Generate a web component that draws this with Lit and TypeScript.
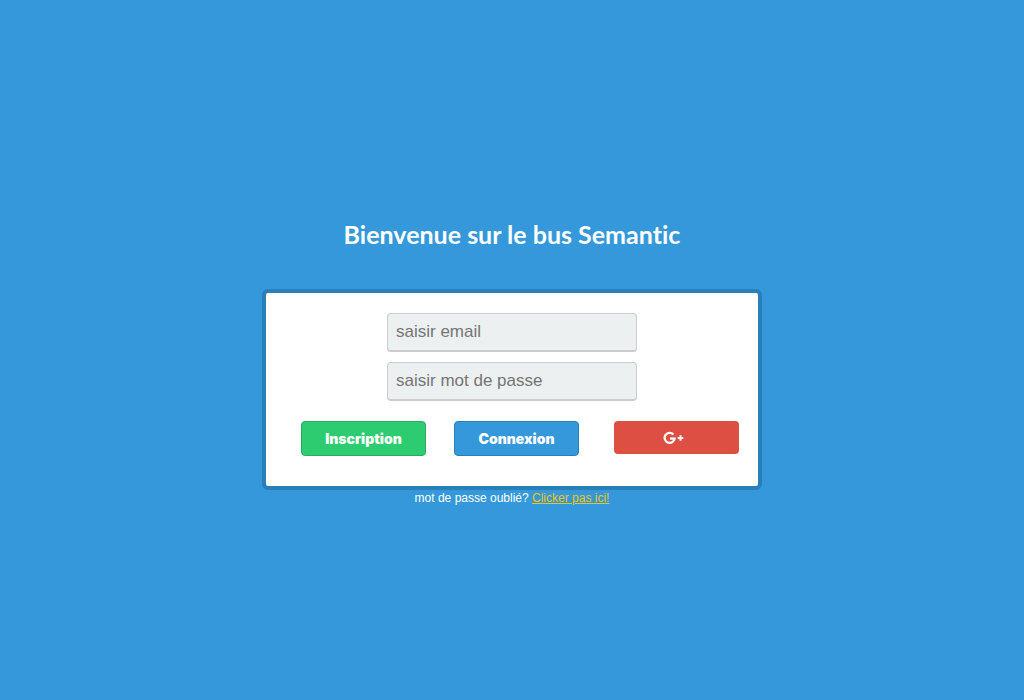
import { LitElement, html, css } from "lit";
import { customElement } from "lit/decorators.js";

@customElement("app-root")
export class AppRoot extends LitElement {
  static styles = css`
    :host {
      display: flex;
      flex-direction: column;
      align-items: center;
      justify-content: center;
      min-height: 100vh;
      box-sizing: border-box;
      background: #3498db;
      color: #fff;
      font-family: "Liberation Sans", Arial, sans-serif;
      font-size: 12px;
    }
    .title {
      margin: 25px 0 39px;
      font: 700 25px/32px Lato, sans-serif;
      font-variant-ligatures: none;
      text-align: center;
    }
    .card {
      box-sizing: border-box;
      width: 500px;
      max-width: 100%;
      padding: 20px 0 30px;
      border: 4px solid #2980b9;
      border-radius: 6px;
      background: #fff;
      display: flex;
      flex-direction: column;
      align-items: center;
      gap: 10px;
    }
    .field {
      box-sizing: border-box;
      width: 250px;
      padding: 8px;
      border: 1px solid #ccc;
      border-bottom-width: 2px;
      border-radius: 4px;
      background: #ecf0f1;
      color: #333;
      font: 17px/20px "Liberation Sans", Arial, sans-serif;
    }
    .field::placeholder {
      color: #757575;
    }
    .actions {
      box-sizing: border-box;
      width: 100%;
      padding: 0 19px 0 35px;
      margin-top: 10px;
      display: flex;
      flex-wrap: wrap;
      align-items: flex-start;
      gap: 28px;
    }
    .button {
      box-sizing: border-box;
      width: 125px;
      height: 35px;
      padding: 0;
      border: 1px solid #2980b9;
      border-radius: 4px;
      background: #3498db;
      color: #fff;
      font: 900 14px/20px Inter, sans-serif;
      cursor: pointer;
    }
    .signup {
      border-color: #27ae60;
      background: #2ecc71;
    }
    .google {
      display: flex;
      align-items: center;
      justify-content: center;
      height: 33px;
      margin-left: auto;
      padding-right: 6px;
      border: 0;
      background: #dd4f43;
    }
    .logo {
      display: block;
      width: 22px;
      height: 14px;
    }
    .help {
      margin: 0;
      line-height: 17px;
    }
    .link {
      color: #f1c40f;
    }
  `;

  render() {
    return html`
      <h1 class="title">Bienvenue sur le bus Semantic</h1>
      <form class="card" @submit=${(e: Event) => e.preventDefault()}>
        <input class="field" type="email" placeholder="saisir email" aria-label="Email" />
        <input class="field" type="password" placeholder="saisir mot de passe" aria-label="Mot de passe" />
        <div class="actions">
          <button class="button signup" type="button">Inscription</button>
          <button class="button" type="submit">Connexion</button>
          <button class="button google" type="button" aria-label="Google+">
            <svg class="logo" viewBox="0 0 22 14" aria-hidden="true">
              <path
                d="M10.4 3.5A5 5 0 1 0 11.6 7.6H7"
                fill="none"
                stroke="#fff"
                stroke-width="2.3"
              />
              <path d="M17.5 4.2v5.6M14.7 7h5.6" stroke="#fff" stroke-width="2" />
            </svg>
          </button>
        </div>
      </form>
      <p class="help">mot de passe oublié? <a class="link" href="#">Clicker pas ici!</a></p>
    `;
  }
}
